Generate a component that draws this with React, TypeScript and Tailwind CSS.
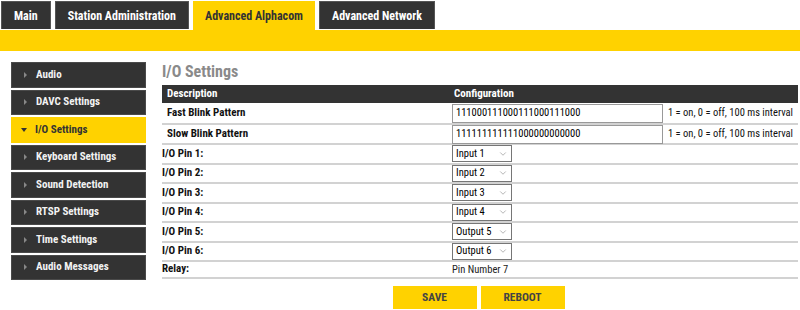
import { ChevronDown } from 'lucide-react'

const tabs = ['Main', 'Station Administration', 'Advanced Alphacom', 'Advanced Network']
const menu = [
  'Audio',
  'DAVC Settings',
  'I/O Settings',
  'Keyboard Settings',
  'Sound Detection',
  'RTSP Settings',
  'Time Settings',
  'Audio Messages',
]
const pins = ['Input 1', 'Input 2', 'Input 3', 'Input 4', 'Output 5', 'Output 6']

const Select = ({ value }: { value: string }) => (
  <div className="flex items-center justify-between w-[60px] h-[17px] border border-[#767676] bg-white pl-[3px] pr-[3px] text-[10.5px] text-black">
    <span>{value}</span>
    <ChevronDown size={10} strokeWidth={1.5} className="text-[#888]" />
  </div>
)

const BlinkRow = ({ label, value, h }: { label: string; value: string; h: string }) => (
  <div className={`flex items-center border-b-2 border-[#d2d2d2] ${h}`}>
    <div className="w-[288px] shrink-0 pl-[5px] font-bold text-[11px] text-[#111]">{label}</div>
    <div className="flex items-center pl-[2px] gap-[5px] whitespace-nowrap">
      <div className="w-[211px] h-[19px] border border-[#999] flex items-center pl-[3px] text-[10.5px] text-black">
        {value}
      </div>
      <span className="text-[10.5px] text-[#111]">1 = on, 0 = off, 100 ms interval</span>
    </div>
  </div>
)

export default function App() {
  return (
    <div className="w-[800px] h-[310px] bg-white overflow-hidden font-['Liberation_Sans_Narrow','Roboto_Condensed','Arial_Narrow',Roboto,sans-serif]">
      <div className="flex gap-1 pl-[1px] pt-[1px] h-[30px]">
        {tabs.map((t) => {
          const active = t === 'Advanced Alphacom'
          return (
            <div
              key={t}
              className={
                active
                  ? 'h-[29px] px-3 flex items-center bg-[#ffd200] text-[#333] font-bold text-[12px]'
                  : 'h-[28px] px-3 flex items-center bg-[#333] border border-[#555] border-b-0 text-white font-bold text-[12px]'
              }
            >
              {t}
            </div>
          )
        })}
      </div>
      <div className="h-[21px] bg-[#ffd200]" />

      <div className="flex">
        <div className="ml-[11px] mt-[11px] w-[135px] flex flex-col gap-[2px]">
          {menu.map((m) => {
            const active = m === 'I/O Settings'
            return (
              <div
                key={m}
                className={
                  active
                    ? 'h-[25.5px] flex items-center bg-[#ffd200] text-[#333] font-bold text-[11px] pl-[10px]'
                    : 'h-[25.5px] flex items-center bg-[#333] border border-[#4a4a4a] text-[#f2f2f2] font-bold text-[11px] pl-[12px]'
                }
              >
                {active ? (
                  <span className="w-0 h-0 border-l-[3px] border-r-[3px] border-t-[4px] border-l-transparent border-r-transparent border-t-[#333] mr-[8px]" />
                ) : (
                  <span className="w-0 h-0 border-t-[3px] border-b-[3px] border-l-[3px] border-t-transparent border-b-transparent border-l-[#888] mr-[9px]" />
                )}
                {m}
              </div>
            )
          })}
        </div>

        <div className="ml-[16px] mt-[11px] flex-1 mr-[2px] min-w-0">
          <div className="text-[16px] leading-[20px] font-bold text-[#8a8a8a] mb-[3px]">I/O Settings</div>

          <div className="flex items-center h-[18px] bg-[#333] text-white font-bold text-[11px]">
            <div className="w-[288px] pl-[5px]">Description</div>
            <div className="pl-[4px]">Configuration</div>
          </div>

          <BlinkRow label="Fast Blink Pattern" value="111000111000111000111000" h="h-[22px]" />
          <BlinkRow label="Slow Blink Pattern" value="111111111111000000000000" h="h-[20px]" />

          {pins.map((p, i) => (
            <div key={p} className="flex items-center h-[19.5px] border-b-2 border-[#d2d2d2]">
              <div className="w-[290px] font-bold text-[11px] text-[#111]">I/O Pin {i + 1}:</div>
              <Select value={p} />
            </div>
          ))}

          <div className="flex items-center h-[17px] border-b-2 border-[#d2d2d2]">
            <div className="w-[290px] font-bold text-[11px] text-[#111]">Relay:</div>
            <span className="text-[10.5px] text-[#222]">Pin Number 7</span>
          </div>

          <div className="flex justify-center gap-1 mt-[7px] pr-[3px]">
            <button className="w-[84px] h-[23px] bg-[#ffd200] text-[#444] font-bold text-[11.5px]">SAVE</button>
            <button className="w-[84px] h-[23px] bg-[#ffd200] text-[#444] font-bold text-[11.5px]">REBOOT</button>
          </div>
        </div>
      </div>
    </div>
  )
}
